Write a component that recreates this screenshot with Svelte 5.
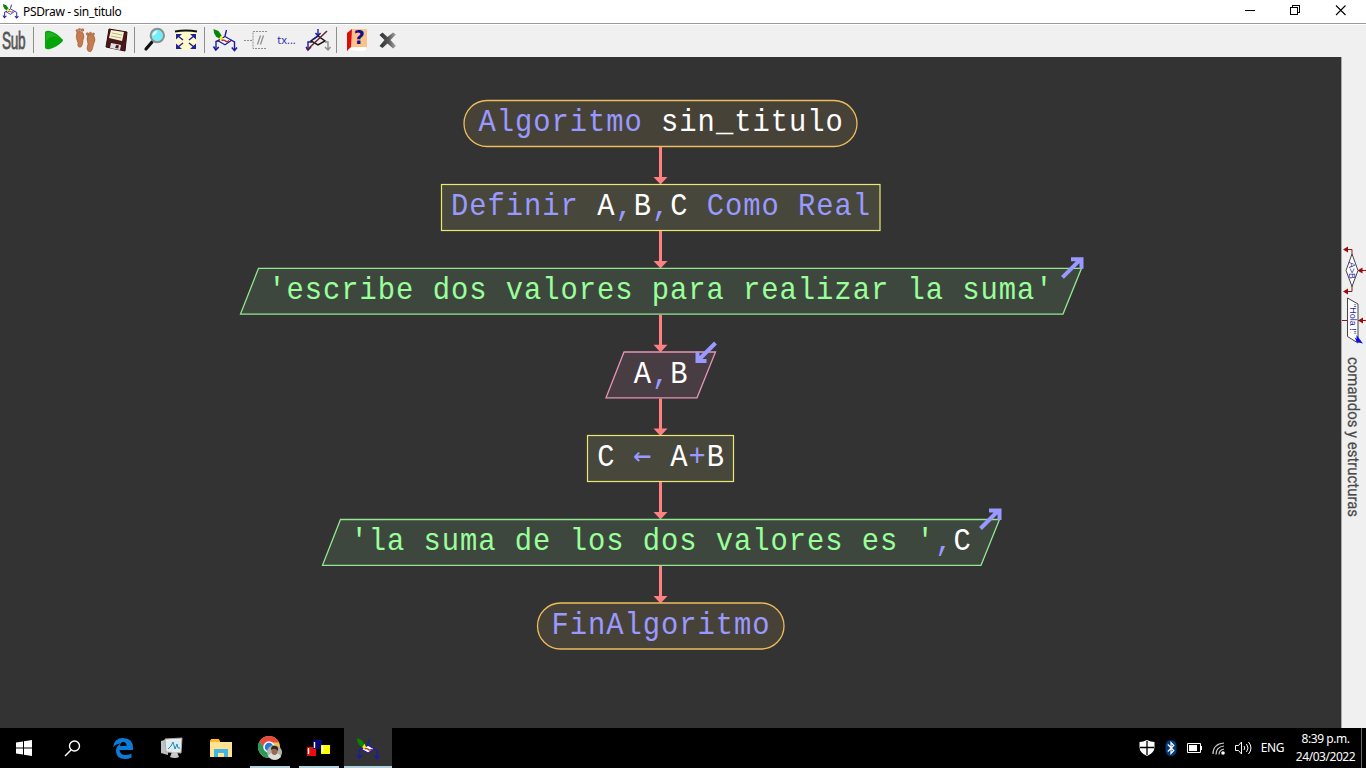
<script>
  const nodes = [
    { kind: 'pill', x1: 464, x2: 857, y: 100.5, parts: [['Algoritmo ', 'k'], ['sin_titulo', 'v']] },
    { kind: 'rect', x1: 441.5, x2: 880, y: 184.5, parts: [['Definir ', 'k'], ['A', 'v'], [',', 'k'], ['B', 'v'], [',', 'k'], ['C', 'v'], [' Como Real', 'k']] },
    { kind: 'out', x1: 240.5, x2: 1081.5, y: 268.3, parts: [["'escribe dos valores para realizar la suma'", 's']] },
    { kind: 'in', x1: 606, x2: 715.5, y: 352, parts: [['A', 'v'], [',', 'k'], ['B', 'v']] },
    { kind: 'rect', x1: 587.5, x2: 733.5, y: 435.5, parts: [['C ', 'v'], ['←', 'a'], [' A', 'v'], ['+', 'k'], ['B', 'v']] },
    { kind: 'out', x1: 322.5, x2: 999.5, y: 519.5, parts: [["'la suma de los dos valores es '", 's'], [',', 'k'], ['C', 'v']] },
    { kind: 'pill', x1: 537.5, x2: 784, y: 603, parts: [['FinAlgoritmo', 'k']] }
  ];
  const pitch = 18.27;
  function placed(n) {
    const total = n.parts.reduce((a, p) => a + p[0].length, 0);
    let at = 660.5 - (total * pitch) / 2;
    return n.parts.map(([t, c]) => {
      const p = { t, c, x: at };
      at += t.length * pitch;
      return p;
    });
  }
</script>

{#snippet flow()}
  <path d="M17.500 5l-1.500 6M11 15l-4 1.500V24M22 15l3.500 2v8" fill="none" stroke="#1c1ca0" stroke-width="1.400" />
  <path d="M16 11.500l6.500 3.700-6.500 4.600-7-4z" fill="#fff" stroke="#1c1ca0" stroke-width="1.200" />
  <path d="M4.500 21.500L6.800 25l3-3M22.800 22.500l2.700 3 2.500-3" fill="none" stroke="#1c1ca0" stroke-width="1.600" />
  <path d="M4.500 4l5 2 3.500 5-1.500 3.500-4.500-3-2-3.500z" fill="#078507" />
  <path d="M10 13.500l2.500-3.500 2 5-3 .5z" fill="#f5ee22" />
  <path d="M12.500 15.500q2.500-1 4 .5t3.500-.500" fill="none" stroke="#b22b25" stroke-width="1.400" />
{/snippet}

<div class="window">
  <header class="title">
    <svg class="appicon" width="17" height="17" viewBox="3 3 26 25">{@render flow()}</svg>
    <span class="caption">PSDraw - sin_titulo</span>
    <svg class="controls" width="120" height="23" viewBox="0 0 120 23">
      <g fill="none" stroke="#000" stroke-width="1" shape-rendering="crispEdges">
        <path d="M0 10.500h10M45.500 7.500h7v7h-7zM47.500 7v-2h7v7h-2" />
      </g>
      <path d="M91 5.500l9.500 9.500M100.500 5.500L91 15" stroke="#000" stroke-width="1.1" />
    </svg>
  </header>

  <div class="toolbar">
    <span class="sub"><span>Sub</span></span>
    <i></i>
    <svg viewBox="0 0 31 32"><path d="M7 8q0-3 5-2 7 2 12 8 2 1 0 3-5 5-12 7-5 1-5-2z" fill="#05a50a" /><path d="M8 8q5-3 13 5Q14 9 8 16z" fill="#20b020" /></svg>
    <svg viewBox="0 0 31 32">
      <g fill="#c37b4f" stroke="#9b5730" stroke-width=".6">
        <path d="M8 7q4-2 6 1 2 4 0 7 0 5-2 7-4 1-3-4-3-6-1-11z" />
        <path d="M19 10q4-2 6 1 2 4 0 7l-2 7q-1 3-4 1-2-2 0-7-2-6 0-9z" />
        <circle cx="8" cy="5.600" r="1" /><circle cx="10.500" cy="4.500" r="1.100" /><circle cx="13.500" cy="5" r="1.300" />
        <circle cx="18.500" cy="9" r="1.300" /><circle cx="21.500" cy="8.300" r="1.100" /><circle cx="24.500" cy="9" r="1" />
      </g>
    </svg>
    <svg viewBox="0 0 31 32">
      <path d="M9 4l18 3-2 19-19-4z" fill="#49171a" stroke="#2c0b0d" />
      <path d="M11 5l13 2-2 9-13-3z" fill="#f7f4cf" /><path d="M12 8l10 2M11 11l10 2" stroke="#bdb58d" />
      <path d="M11 18l10 2-1 5-10-2z" fill="#dfe0e5" /><path d="M16 20l3 .6-.8 3-3-.6z" fill="#49171a" />
    </svg>
    <i></i>
    <svg viewBox="0 0 31 32">
      <path d="M13 17l-6 7" stroke="#111" stroke-width="3.200" stroke-linecap="round" />
      <circle cx="18.300" cy="10.500" r="6.700" fill="#74eef6" stroke="#8b8f93" stroke-width="2" />
      <path d="M13.500 11q0-5 5-5.500-1 4-5 5.500z" fill="#e9ffff" />
    </svg>
    <svg viewBox="0 0 31 32">
      <path d="M5 6q11-2 22 0l-1 18q-10 2-20 0z" fill="#fffbc8" />
      <path d="M5 6.500q11-2 22 0" fill="none" stroke="#111" stroke-width="2" />
      <g stroke="#20209c" stroke-width="1.500" fill="#20209c">
        <path d="M8 11l5 4M24 11l-5 4M8 22l5-4M24 22l-5-4" />
        <path d="M6 9h6l-6 5.500zM26 9h-6l6 5.500zM6 24h6l-6-5.500zM26 24h-6l6-5.500z" stroke="none" />
      </g>
    </svg>
    <i></i>
    <svg viewBox="0 0 31 32">{@render flow()}</svg>
    <svg viewBox="0 0 31 32"><path d="M4 15.500h9M27 6.500H13v17h14" fill="none" stroke="#8d8d8d" stroke-dasharray="2 1" /><path d="M17.500 19.500l3-9M20.500 19.500l3-9" stroke="#909090" stroke-width="1.300" /></svg>
    <span class="tx">tx...</span>
    <svg viewBox="0 0 31 32">
      <path d="M16 4v7M13.500 8l2.500 3 2.500-3M10 17H6v8" fill="none" stroke="#1c1ca0" stroke-width="1.400" />
      <path d="M4 22l2 3 3-3" fill="none" stroke="#1c1ca0" stroke-width="1.500" />
      <path d="M16 11l7 5-7 4-7-4z" fill="#eee" stroke="#151515" stroke-width="1.500" />
      <path d="M10 15l6-4" stroke="#1c1ca0" stroke-width="1.500" />
      <path d="M23 17h3v8M23 22l3 3 2.500-3" fill="none" stroke="#8d8d8d" stroke-width="1.400" />
      <path d="M5 25L25 6" stroke="#6a2127" stroke-width="1.500" />
    </svg>
    <i></i>
    <svg viewBox="0 0 31 32">
      <path d="M6 8l5-4v18l-5 4z" fill="#d90d0d" /><path d="M7 25l4-4h14v4l-3 1z" fill="#fff" />
      <path d="M11 4h15v18H10z" fill="#ffc18a" />
      <text x="18.300" y="19" text-anchor="middle" class="question">?</text>
    </svg>
    <svg viewBox="0 0 31 32">
      <defs><linearGradient id="fade"><stop stop-color="#303030" /><stop offset=".55" stop-color="#555" /><stop offset="1" stop-color="#aaa" /></linearGradient></defs>
      <path d="M7.500 10l3-2.500 5 4.500 5.500-4.500 3 2-5.500 5.500 5.500 6-3 2.500-5.500-5-5 4.500-3-2 5-6z" fill="url(#fade)" />
    </svg>
  </div>

  <main>
    <svg class="chart" width="1341" height="671" viewBox="0 57 1341 671">
      {#each nodes as n, i}
        {#if n.kind === 'pill'}
          <rect class="pill" x={n.x1} y={n.y} width={n.x2 - n.x1} height="46" rx="23" />
        {:else if n.kind === 'rect'}
          <rect class="box" x={n.x1} y={n.y} width={n.x2 - n.x1} height="46" />
        {:else}
          <path class={n.kind} d="M{n.x1 + 18} {n.y}H{n.x2}L{n.x2 - 18.5} {n.y + 45.8}H{n.x1}z" />
        {/if}
        {#if n.kind === 'out'}
          <g transform="translate({n.x2} {n.y})"><path class="io" d="M-19 9L-1-9M-10.500-9H0V0.500" /></g>
        {:else if n.kind === 'in'}
          <g transform="translate({n.x2} {n.y})"><path class="io" d="M0-9L-18 9M-18-.5V9H-9" /></g>
        {/if}
        {#each placed(n) as p}
          {#if p.c === 'a'}
            <text class="wide k" x={p.x + 9.1} y={n.y + 29.5} text-anchor="middle">{p.t}</text>
          {:else}
            <text class="code {p.c}" transform="translate({p.x + .6} {n.y + 30.5}) scale(.93 1)">{p.t}</text>
          {/if}
        {/each}
        {#if i < nodes.length - 1}
          <path d="M660.500 {n.y + 46.5}V{n.y + 78}" stroke="#ff8080" stroke-width="3" />
          <path d="M653.500 {n.y + 76.500}h14l-7 7.500z" fill="#ff8080" />
        {/if}
      {/each}
    </svg>
    <aside>
      <svg width="24" height="671" viewBox="1342 57 24 671">
        <g fill="none" stroke="#851717" stroke-width="1">
          <path d="M1352 256v-6.500h-6M1352 285v6.500h-6M1358 270.500h8M1342 320.500h5M1357 320.500h9" />
        </g>
        <path d="M1343 249.500l5-3v6zM1343 291.500l5-3v6zM1357.500 270.500l5-3v6zM1358 320.500l5-3v6z" fill="#9c0909" />
        <path d="M1352 254l6 16.500-6 16-6-16zM1347.500 298l10.500 6v39l-10.500-6.500z" fill="#fff" stroke="#454545" />
        <path d="M1363 343.500l-6.500-8.500v4l-2-2 2 4.500h-2z" fill="#0710f0" />
        <text class="tiny" transform="translate(1349 262) rotate(90)" textLength="17" lengthAdjust="spacingAndGlyphs">A&gt;B</text>
        <text class="tiny" transform="translate(1349.500 304) rotate(90)" textLength="30" lengthAdjust="spacingAndGlyphs">"Hola !"</text>
        <text class="side" transform="translate(1348 357) rotate(90)" textLength="160" lengthAdjust="spacingAndGlyphs">comandos y estructuras</text>
      </svg>
    </aside>
  </main>

  <footer>
    <span class="task first"><svg width="16" height="16"><path d="M0 2.500L7 1.400V7.500H0zM8 1.200L16 0V7.500H8zM0 8.500h7v6L0 13.500zM8 8.500h8V16l-8-1.200z" fill="#fff" /></svg></span>
    <span class="task second"><svg width="17" height="17"><circle cx="10.500" cy="6" r="5" fill="none" stroke="#fff" stroke-width="1.400" /><path d="M7 10L1 16" stroke="#fff" stroke-width="1.500" /></svg></span>
    <span class="task"><svg width="20" height="21" viewBox="0 0 20 21"><path d="M0 9.500Q1 0 10 0q10 0 10 10v2H6.500q.5 5 6 5 3.500 0 6-1.500v4q-3 1.500-7 1.500Q3 20.500 3 13q0-5 4.500-7.500Q2.500 6 0 9.500zM7 8h6.500q0-4-3.300-4Q7.500 4 7 8z" fill="#0a7bd8" fill-rule="evenodd" /></svg></span>
    <span class="task"><svg width="23" height="22" viewBox="0 0 23 22"><path d="M1 4l7-2v16l-7-2z" fill="#bfc2c4" /><path d="M5 2l17-1-1 15-15-1z" fill="#eceeed" stroke="#a4a9ac" /><path d="M7 4l13-.7-.7 10.300-11.500-.3z" fill="#dceaf1" /><path d="M8 12l3-3 2-4 2 7 2-5 1 4h2" fill="none" stroke="#2689b3" /><path d="M12 15h5l2 5q-4 2-9 0z" fill="#c8caca" /></svg></span>
    <span class="task"><svg width="22" height="19" viewBox="0 0 22 19"><path d="M1 1h8l1 2h12v15H0V2z" fill="#ffe391" /><path d="M1 0h8l1 3H0z" fill="#ffb72b" /><path d="M4 18v-8h14v8h-4v-4H8v4z" fill="#3eb5e5" /></svg></span>
    <span class="task open">
      <svg width="26" height="26" viewBox="0 0 26 26"><circle cx="12" cy="12" r="11" fill="#f2c640" /><path d="M2.500 6.500Q6 1 12 1q7 0 10 6.500H12L8 14z" fill="#e44a3e" /><path d="M2.500 6.500Q-1 12 3 18q4 5 9 5l4-7-7-1z" fill="#27995a" /><circle cx="12" cy="12" r="5" fill="#2979da" stroke="#fff" stroke-width="1.500" /><circle cx="17.500" cy="17.500" r="7.500" fill="#b4b5aa" /><path d="M11 21q3-5 7-2 4-2 6 3-6 6-13-1z" fill="#ddd" /><ellipse cx="17.500" cy="16" rx="3" ry="4" fill="#9a6954" /><path d="M14 15q0-5 4-4 4 0 3 5-3-4-7-1z" fill="#302722" /></svg>
    </span>
    <span class="task open"><svg width="23" height="16" viewBox="0 0 23 16"><path d="M0 7h9v9H0z" fill="#ef0b0b" /><path d="M6 0h9v9H6z" fill="#080878" /><path d="M14 5h9v9h-9z" fill="#ff0" /><path d="M1.500 8v6M7.500 2v6M15.500 6v6" stroke="#fff" stroke-width="1.400" /></svg></span>
    <span class="task open active"><svg width="24" height="23" viewBox="3.500 3 25 24">{@render flow()}</svg></span>
    <span class="gap"></span>
    <span class="tray"><svg width="16" height="16"><path d="M8 0q4 2 7.500 2v5q0 6-7.500 9Q.5 13 .5 7V2Q4 2 8 0z" fill="#fff" /><path d="M8 1v14M1 7.500h14" stroke="#000" stroke-width="1.300" /></svg></span>
    <span class="tray"><svg width="12" height="16"><rect x=".5" width="11" height="16" rx="5.500" fill="#033a7b" /><path d="M2.800 4.500l6 6L6 13.500v-11l2.800 3-6 6" fill="none" stroke="#fff" stroke-width="1.200" /></svg></span>
    <span class="tray"><svg width="16" height="10"><path d="M.5.500h13v9H.5zM14.500 3v4" fill="none" stroke="#fff" /><path d="M2 2h8v6H2z" fill="#fff" /></svg></span>
    <span class="tray"><svg width="14" height="13" viewBox="0 0 14 13"><g fill="none" stroke="#ccc" stroke-width="1.200"><path d="M1 12Q1 2 12 1M4 12.500Q4 5 12 4M7 12.500Q7 8 12 7" /></g><circle cx="11" cy="11" r="1.800" fill="#fff" /></svg></span>
    <span class="tray"><svg width="17" height="14" viewBox="0 0 17 14"><path d="M.5 4.500h3l3-3.500v12l-3-3.500h-3zM9 5q1.500 2 0 4M11.500 3q3 4 0 8M13.500 1q5 6 0 12" fill="none" stroke="#fff" /></svg></span>
    <span class="lang">ENG</span>
    <span class="clock"><span>8:39 p.m.</span><span>24/03/2022</span></span>
    <span class="peek"></span>
  </footer>
</div>

<style>
  :global(body) { margin: 0; overflow: hidden; }
  .window { width: 1366px; height: 768px; display: flex; flex-direction: column; background: #333; font-family: "Noto Sans", sans-serif; overflow: hidden; }
  svg { display: block; flex: none; }
  .title { height: 23px; background: #fff; border-bottom: 1px solid #999; display: flex; align-items: center; color: #000; }
  .appicon { margin-left: 2px; }
  .caption { margin-left: 4px; font-size: 12px; letter-spacing: -0.33px; flex: 1; line-height: 22px; white-space: nowrap; }
  .controls { margin-right: 1px; }
  .toolbar { height: 32px; border-top: 1px solid #fff; background: #f0f0f0; display: flex; }
  .toolbar svg { width: 31px; height: 32px; }
  .toolbar i { width: 1px; height: 26px; margin: 2px 4px 0 3px; background: #8e8e8e; }
  .sub { width: 30px; height: 32px; display: flex; justify-content: center; align-items: center; }
  .sub span { font: 23px/32px "Liberation Sans", sans-serif; color: #555; -webkit-text-stroke: .8px #555; letter-spacing: -.5px; transform: translate(-1px, 0) scaleX(.59); }
  .tx { width: 31px; font-size: 11px; line-height: 29px; text-align: center; color: #3333aa; }
  .question { font: bold 19px "DejaVu Sans", sans-serif; fill: #11118c; }
  main { flex: 1; display: flex; min-height: 0; }
  aside { border-left: 1px solid #aaa; background: #f0f0f0; width: 24px; }
  .code { font-family: "Liberation Mono", monospace; font-size: 31px; letter-spacing: 1.04px; white-space: pre; }
  .wide { font: 30px "DejaVu Sans Mono", monospace; }
  .k { fill: #9999ff; }
  .v { fill: #fff; }
  .s { fill: #99ff99; }
  .pill { fill: #474238; stroke: #edbc5b; stroke-width: 1.3; }
  .box { fill: #47473b; stroke: #e8e873; stroke-width: 1.2; }
  .out { fill: #3e473e; stroke: #91e891; stroke-width: 1.3; }
  .in { fill: #473d43; stroke: #e895b9; stroke-width: 1.3; }
  .io { fill: none; stroke: #9999ff; stroke-width: 4; }
  .tiny { font: 9px "Liberation Sans", sans-serif; fill: #2525a5; }
  .side { font: 16px Roboto, sans-serif; fill: #484848; stroke: #484848; stroke-width: .2; text-rendering: geometricPrecision; }
  footer { height: 40px; background: #000; color: #fff; display: flex; }
  .task { width: 49px; display: flex; align-items: center; justify-content: center; position: relative; }
  .first { width: 48px; }
  .second { width: 48px; margin-right: 2px; }
  .open::after { content: ""; position: absolute; bottom: 0; left: 5px; width: 40px; height: 2px; background: #b1d2dc; }
  .active { background: #333; width: 48px; margin-left: 1px; }
  .active::after { left: 0; width: 48px; }
  .gap { flex: 1; }
  .tray { width: 24px; display: flex; align-items: center; justify-content: center; }
  .lang { width: 35px; font-size: 12px; line-height: 39px; text-align: center; letter-spacing: -.3px; }
  .clock { width: 71px; display: flex; flex-direction: column; font-size: 12px; line-height: 18px; padding-top: 2px; box-sizing: border-box; text-align: center; letter-spacing: -.45px; white-space: nowrap; }
  .peek { width: 4px; border-left: 1px solid #666; }
</style>
